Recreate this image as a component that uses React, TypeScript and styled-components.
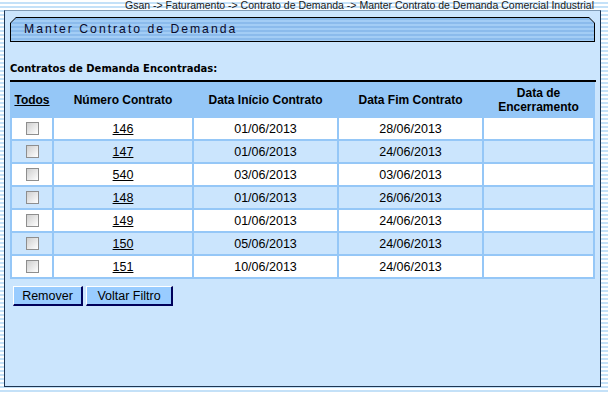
import React from 'react'
import styled, { createGlobalStyle } from 'styled-components'

const GlobalStyle = createGlobalStyle`
  html, body {
    margin: 0;
    padding: 0;
  }
  body {
    background: repeating-linear-gradient(
      to bottom,
      #ffffff 0px,
      #ffffff 2px,
      #c4e1f8 2px,
      #c4e1f8 4px
    );
    font-family: 'Liberation Sans', Arial, sans-serif;
    color: #000;
  }
`

const Page = styled.div`
  width: 608px;
  height: 393px;
  overflow: hidden;
`

const Breadcrumb = styled.div`
  height: 10px;
  line-height: 11px;
  font-size: 10.5px;
  text-align: right;
  padding-right: 14px;
  color: #1a1a1a;
  white-space: nowrap;
`

const Panel = styled.div`
  box-sizing: border-box;
  margin-left: 4px;
  width: 597px;
  height: 377px;
  border: 1px solid #1d3553;
  border-top-color: #7f9ab5;
  background: #cbe5fd;
  padding: 6px 5px;
`

const TitleBar = styled.div`
  position: relative;
  width: 585px;
  height: 25px;
  background: #000;
  clip-path: polygon(6px 0, calc(100% - 6px) 0, 100% 6px, 100% 100%, 0 100%, 0 6px);

  &::before {
    content: '';
    position: absolute;
    inset: 1px;
    background: repeating-linear-gradient(
      to bottom,
      #8bbbec 0px,
      #8bbbec 2px,
      #a3cdf5 2px,
      #a3cdf5 4px
    );
    clip-path: polygon(5px 0, calc(100% - 5px) 0, 100% 5px, 100% 100%, 0 100%, 0 5px);
  }

  span {
    position: relative;
    display: block;
    line-height: 25px;
    padding-left: 14px;
    font-size: 12.2px;
    letter-spacing: 2px;
    color: #0a0a2a;
  }
`

const SectionTitle = styled.div`
  margin-top: 21px;
  height: 12px;
  line-height: 12px;
  font-family: 'DejaVu Sans', Verdana, sans-serif;
  font-size: 10px;
  font-weight: bold;
  margin-bottom: 5px;
`

const Rule = styled.div`
  width: 586px;
  height: 2px;
  background: #000;
`

const Table = styled.table`
  width: 585px;
  border-spacing: 2px;
  background: #95c7f7;
  table-layout: fixed;
  font-size: 12px;
`

const HeadCell = styled.th<{ $link?: boolean }>`
  height: 32px;
  padding: 0 2px;
  font-weight: bold;
  line-height: 14px;
  text-align: center;
  text-decoration: ${(p) => (p.$link ? 'underline' : 'none')};
  vertical-align: middle;
`

const Row = styled.tr<{ $alt: boolean }>`
  td {
    background: ${(p) => (p.$alt ? '#cbe5fd' : '#ffffff')};
  }
`

const Cell = styled.td`
  height: 21px;
  padding: 0;
  font-size: 12.5px;
  text-align: center;
  vertical-align: middle;
`

const NumberLink = styled.a`
  color: #000;
  text-decoration: underline;
`

const Check = styled.input.attrs({ type: 'checkbox' })`
  appearance: none;
  display: block;
  margin: 0 auto;
  width: 13px;
  height: 13px;
  box-sizing: border-box;
  border: 1px solid #8e8e8e;
  background: linear-gradient(135deg, #cfcfcf 0%, #e9e9e9 55%, #ffffff 100%);
`

const Actions = styled.div`
  display: flex;
  gap: 3px;
  margin: 7px 0 0 3px;
`

const Button = styled.button<{ $w: number }>`
  box-sizing: border-box;
  width: ${(p) => p.$w}px;
  height: 20px;
  padding: 0;
  background: #99ccff;
  border-top: 1px solid #ffffff;
  border-left: 1px solid #ffffff;
  border-right: 2px solid #00005a;
  border-bottom: 2px solid #00005a;
  font-family: 'Liberation Sans', Arial, sans-serif;
  font-size: 12.5px;
  color: #000;
`

const contratos = [
  { numero: '146', inicio: '01/06/2013', fim: '28/06/2013' },
  { numero: '147', inicio: '01/06/2013', fim: '24/06/2013' },
  { numero: '540', inicio: '03/06/2013', fim: '03/06/2013' },
  { numero: '148', inicio: '01/06/2013', fim: '26/06/2013' },
  { numero: '149', inicio: '01/06/2013', fim: '24/06/2013' },
  { numero: '150', inicio: '05/06/2013', fim: '24/06/2013' },
  { numero: '151', inicio: '10/06/2013', fim: '24/06/2013' },
]

const App: React.FC = () => {
  return (
    <Page>
      <GlobalStyle />
      <Breadcrumb>
        Gsan -&gt; Faturamento -&gt; Contrato de Demanda -&gt; Manter Contrato de Demanda Comercial Industrial
      </Breadcrumb>
      <Panel>
        <TitleBar>
          <span>Manter Contrato de Demanda</span>
        </TitleBar>

        <SectionTitle>Contratos de Demanda Encontradas:</SectionTitle>
        <Rule />

        <Table>
          <colgroup>
            <col style={{ width: 40 }} />
            <col style={{ width: 138 }} />
            <col style={{ width: 143 }} />
            <col style={{ width: 143 }} />
            <col style={{ width: 109 }} />
          </colgroup>
          <thead>
            <tr>
              <HeadCell $link>Todos</HeadCell>
              <HeadCell>Número Contrato</HeadCell>
              <HeadCell>Data Início Contrato</HeadCell>
              <HeadCell>Data Fim Contrato</HeadCell>
              <HeadCell>Data de Encerramento</HeadCell>
            </tr>
          </thead>
          <tbody>
            {contratos.map((c, i) => (
              <Row key={c.numero} $alt={i % 2 === 1}>
                <Cell>
                  <Check />
                </Cell>
                <Cell>
                  <NumberLink href="#">{c.numero}</NumberLink>
                </Cell>
                <Cell>{c.inicio}</Cell>
                <Cell>{c.fim}</Cell>
                <Cell />
              </Row>
            ))}
          </tbody>
        </Table>

        <Actions>
          <Button $w={70}>Remover</Button>
          <Button $w={87}>Voltar Filtro</Button>
        </Actions>
      </Panel>
    </Page>
  )
}

export default App
